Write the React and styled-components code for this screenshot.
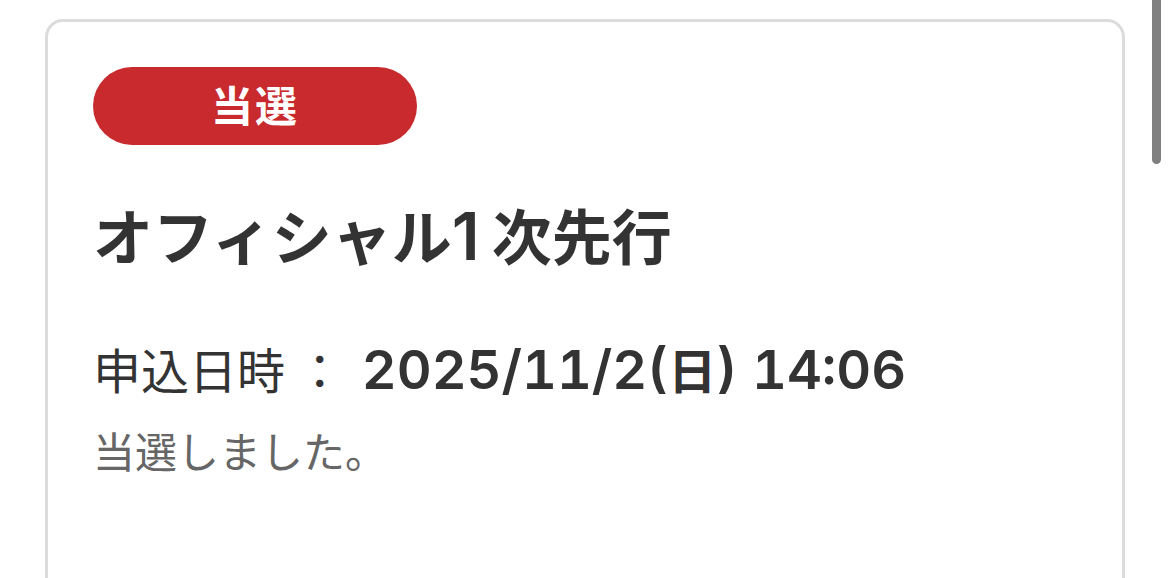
import React from 'react';
import styled, { createGlobalStyle } from 'styled-components';

const GlobalStyle = createGlobalStyle`
  * {
    box-sizing: border-box;
  }
  html, body, #root {
    height: 100%;
  }
  body {
    margin: 0;
    overflow: hidden;
    background: #fff;
    color: #333;
    font-family: "Noto Sans CJK JP", sans-serif;
  }
`;

const Page = styled.main`
  display: flex;
  height: 100%;
  padding: 19px 45px 0;
`;

const Card = styled.section`
  flex: 1;
  padding: 45px;
  border: 3px solid #dcdcdc;
  border-bottom: 0;
  border-radius: 18px 18px 0 0;
`;

const Status = styled.div`
  width: 324px;
  height: 78px;
  border-radius: 39px;
  background: #c82a2e;
  color: #fff;
  font-size: 42px;
  font-weight: 700;
  line-height: 74px;
  letter-spacing: 2px;
  text-align: center;
`;

const Title = styled.h1`
  margin: 44px 0 0;
  font-size: 60px;
  font-weight: 700;
  line-height: 90px;
`;

const Entry = styled.dl`
  display: flex;
  gap: 18px;
  margin: 53px 0 0;
  font-size: 48px;
  line-height: 72px;
  white-space: nowrap;
`;

const Label = styled.dt`
  font-weight: 400;
`;

const Value = styled.dd`
  margin: 0;
  font-weight: 700;
`;

// latin digits run larger than the kanji around them
const Digits = styled.span`
  font-family: Inter, sans-serif;
  font-size: 54px;
  font-weight: 600;
  font-variant-numeric: tabular-nums;
  line-height: 1;
`;

const TitleDigit = styled(Digits)`
  padding-right: 12px;
  font-size: 66px;
  font-variant-numeric: normal;
`;

const Message = styled.p`
  margin: 14px 0 0;
  color: #666;
  font-size: 42px;
  line-height: 64px;
`;

const ScrollThumb = styled.div`
  position: fixed;
  top: -12px;
  right: 9px;
  width: 9px;
  height: 176px;
  border-radius: 5px;
  background: #808080;
`;

function App() {
  return (
    <>
      <GlobalStyle />
      <Page>
        <Card>
          <Status>当選</Status>
          <Title>オフィシャル<TitleDigit>1</TitleDigit>次先行</Title>
          <Entry>
            <Label>申込日時 ：</Label>
            <Value>
              <Digits>2025/11/2(</Digits>日<Digits>) 14:06</Digits>
            </Value>
          </Entry>
          <Message>当選しました。</Message>
        </Card>
      </Page>
      <ScrollThumb />
    </>
  );
}

export default App;
